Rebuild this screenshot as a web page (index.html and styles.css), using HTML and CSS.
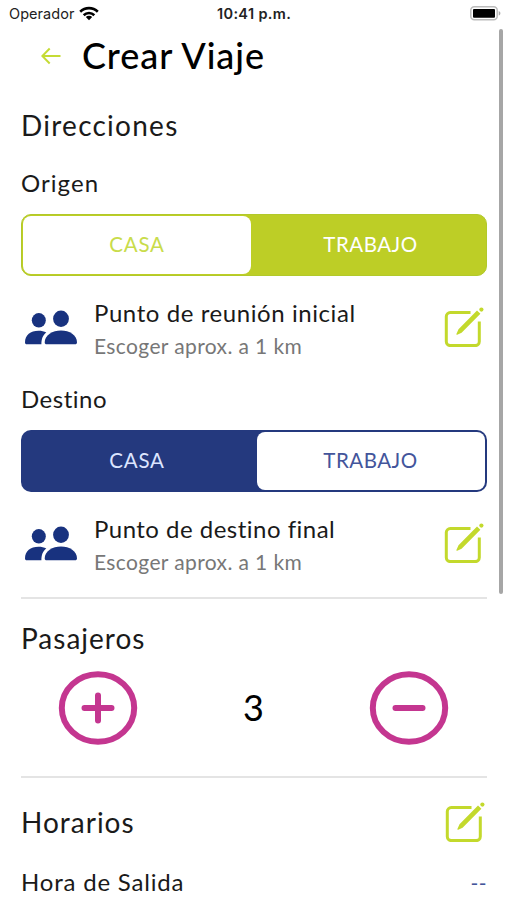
FILE: index.html
```html
<!DOCTYPE html>
<html lang="es">
<head>
<meta charset="utf-8">
<title>Crear Viaje</title>
<link rel="stylesheet" href="styles.css">
</head>
<body>
<svg class="defs" aria-hidden="true">
  <symbol id="people" viewBox="0 0 54 36">
    <ellipse cx="14.8" cy="10.3" rx="7" ry="7.3"/>
    <path d="M1 32.5C1 25 6.500 20.800 14.500 20.800c3 0 5.700.5 7.800 1.700-3.500 2.700-4.800 6-4.900 11.800H3c-1.400 0-2-.6-2-1.800z"/>
    <ellipse cx="37" cy="8.700" rx="7.900" ry="8.200"/>
    <path d="M20.700 32.500C20.700 25 28.500 20.500 37 20.500S53 25 53 32.500c0 1.200-.8 1.800-2 1.800H22.700c-1.300 0-2-.6-2-1.800z"/>
  </symbol>
  <symbol id="edit" viewBox="0 0 40 40">
    <path class="line" d="M26.500 5.600H6.300a4 4 0 0 0-4 4v25a4 4 0 0 0 4 4h25a4 4 0 0 0 4-4V14.500"/>
    <path d="M33 3.500l3.400 3.300L17.600 25.700l-4.400 2a.6.6 0 0 1-.8-.8l2.100-4.700z"/>
    <circle cx="37.400" cy="2.600" r="2.100"/>
  </symbol>
</svg>
<header class="status">
  <span class="carrier">Operador</span>
  <svg class="wifi" viewBox="0 0 20 15"><g fill="none" stroke="#000" stroke-width="2.600"><path d="M1.200 5.700a12.600 12.600 0 0 1 17.600 0"/><path d="M4.700 9.200a7.600 7.600 0 0 1 10.600 0"/></g><path d="M10 14.300l-3.200-3.200a4.600 4.600 0 0 1 6.400 0z"/></svg>
  <span class="clock">10:41 p.m.</span>
  <svg class="battery" viewBox="0 0 31 15"><rect x=".8" y=".8" width="26.400" height="13" rx="3.500" fill="#fff" stroke="#bbb" stroke-width="1.500"/><rect x="3" y="3" width="22" height="8.800" rx="1"/><path d="M28.700 5v4.600c2.300-.8 2.300-3.800 0-4.600z" fill="#aaa"/></svg>
</header>
<div class="scrollbar"></div>
<main>
  <div class="title">
    <svg class="back" viewBox="0 0 20 18"><path d="M19.500 9H1.500M8.700 1.500L1.300 9l7.400 7.500"/></svg>
    <h1>Crear Viaje</h1>
  </div>
  <h2 class="dir">Direcciones</h2>
  <section class="origin">
    <h3>Origen</h3>
    <div class="segment"><span class="on"><b class="casa">CASA</b></span><span><b class="trabajo">TRABAJO</b></span></div>
    <div class="point">
      <svg class="people"><use href="#people"/></svg>
      <div class="text"><p class="name">Punto de reunión inicial</p><p class="hint">Escoger aprox. a 1 km</p></div>
      <svg class="edit"><use href="#edit"/></svg>
    </div>
  </section>
  <section class="destination">
    <h3>Destino</h3>
    <div class="segment"><span><b class="casa">CASA</b></span><span class="on"><b class="trabajo">TRABAJO</b></span></div>
    <div class="point">
      <svg class="people"><use href="#people"/></svg>
      <div class="text"><p class="name t-final">Punto de destino final</p><p class="hint">Escoger aprox. a 1 km</p></div>
      <svg class="edit"><use href="#edit"/></svg>
    </div>
  </section>
  <section class="passengers">
    <h2>Pasajeros</h2>
    <div class="stepper">
      <svg viewBox="0 0 80 74"><ellipse cx="40" cy="37" rx="36.200" ry="33.700"/><path d="M26.500 37h27M40 24.500v25"/></svg>
      <span>3</span>
      <svg viewBox="0 0 80 74"><ellipse cx="40" cy="37" rx="36.200" ry="33.700"/><path d="M26.500 37h27"/></svg>
    </div>
  </section>
  <section class="schedule">
    <div class="heading"><h2>Horarios</h2><svg class="edit"><use href="#edit"/></svg></div>
    <div class="time"><h3>Hora de Salida</h3><span>--</span></div>
  </section>
</main>
</body>
</html>
```
FILE: styles.css
```css
* { box-sizing: border-box; }
body { margin: 0; width: 507px; height: 900px; overflow: hidden; background: #fff; color: #1a1a1a; font-family: Lato, sans-serif; font-variant-ligatures: none; }
h1, h2, h3, p { margin: 0; font-weight: 400; white-space: nowrap; }
svg { display: block; flex: none; }
.defs { display: none; }
.status { display: grid; grid-template-columns: 69px 148px 1fr 31px; align-items: center; height: 28px; padding: 0 6px 2px 9px; font: 15px/20px Inter, sans-serif; color: #222; }
.carrier { font-size: 14.500px; letter-spacing: .05px; padding-top: 1px; }
.wifi { width: 20px; height: 15px; margin-left: 1px; }
.clock { font-weight: 600; font-size: 14.500px; letter-spacing: .35px; margin-left: -9px; padding-top: 1px; }
.battery { width: 31px; height: 15px; }
.scrollbar { position: absolute; left: 499px; top: 29px; width: 4px; height: 565px; border-radius: 2px; background: #a6a6a6; }
main { padding: 0 20px 0 21px; }
.title { display: flex; align-items: center; height: 54px; padding-left: 20px; }
.back { width: 20px; height: 18px; margin: 2px 21px 0 0; fill: none; stroke: #c5db35; stroke-width: 2; }
h1 { font-size: 36px; line-height: 54px; font-weight: 500; color: #000; letter-spacing: .92px; }
h2 { font-size: 28px; letter-spacing: 1px; }
h3 { font-size: 24px; letter-spacing: .8px; }
.dir { height: 86px; line-height: 86px; letter-spacing: 1.250px; }
.origin h3, .destination h3 { line-height: 30px; }
.origin h3 { letter-spacing: 1.050px; }
.destination h3 { letter-spacing: .5px; }
.segment { display: grid; grid-template-columns: 1fr 1fr; height: 62px; margin-top: 15.500px; border-radius: 10px; padding: 2px; }
.segment span { display: flex; align-items: center; justify-content: center; border-radius: 8px; color: #fff; }
.segment b { font-size: 20.500px; line-height: 24px; padding-bottom: 2px; font-weight: 400; letter-spacing: .5px; }
.segment .casa { letter-spacing: .8px; margin-right: 3px; }
.segment .trabajo { margin-left: 2px; }
.origin .segment { background: #bdce26; border: 1px solid #b2c92b; padding: 1px; }
.origin .on { background: #fff; color: #c9dc4b; margin-right: 3px; }
.origin .on b { margin-left: 3px; }
.destination .segment { background: #24397e; margin-top: 16.500px; }
.destination .on { background: #fff; color: #43559b; margin-left: 3px; }
.destination .on b { margin-right: 3px; }
.destination .segment span:first-child { color: #dce5ff; }
.point { display: flex; height: 108px; padding-top: 20px; }
.people { width: 54px; height: 36px; margin: 14px 0 0 3px; fill: #18327f; }
.text { width: 366px; padding-left: 16px; }
.name { font-size: 24px; line-height: 34px; letter-spacing: .580px; }
.t-final { letter-spacing: .480px; }
.hint { font-size: 21px; line-height: 32px; color: #777; letter-spacing: .380px; }
.edit { width: 40px; height: 40px; fill: #c3d92c; overflow: visible; }
.line { fill: none; stroke: #c3d92c; stroke-width: 3px; }
.point .edit { margin-top: 11px; }
.destination .point { height: 107px; border-bottom: 2px solid #e4e4e4; }
.passengers { height: 179px; border-bottom: 2px solid #e4e4e4; }
.passengers h2 { height: 72px; line-height: 66px; padding-top: 6px; }
.stepper { display: flex; justify-content: space-between; align-items: center; padding: 0 38px 0 37px; }
.stepper svg { width: 80px; height: 74px; fill: none; stroke: #c43690; stroke-width: 6; stroke-linecap: round; }
.stepper span { font-size: 36px; line-height: 72px; padding-bottom: 2px; color: #000; }
.heading, .time { display: flex; justify-content: space-between; align-items: center; }
.heading { height: 87px; }
.heading .edit { margin-right: 2px; }
.time { height: 32px; }
.time span { font-size: 21px; color: #43559b; letter-spacing: .5px; padding-top: 2px; }
```
